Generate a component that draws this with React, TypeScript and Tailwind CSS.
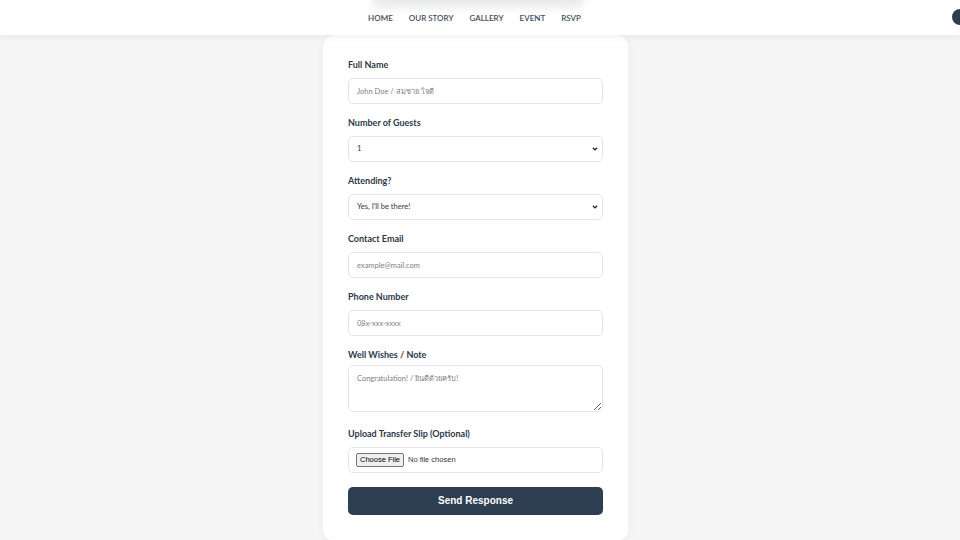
import React from "react";

const font = { fontFamily: '"Lato", "Noto Sans", sans-serif' };

const Field = ({ label, children, mb = "mb-[7px]" }: { label: string; children: React.ReactNode; mb?: string }) => (
  <div className="mb-[13px]">
    <label className={"block text-[9px] leading-[12px] font-bold text-[#2d3748] " + mb}>{label}</label>
    {children}
  </div>
);

const inputCls =
  "block w-full h-[26px] px-[8px] text-[7.5px] text-[#2d3748] placeholder:text-[#808080] bg-white border border-[#e2e5ea] rounded-[5px] outline-none";

const Select = ({ children, value }: { children: React.ReactNode; value: string }) => (
  <div className="relative">
    <select className={inputCls + " appearance-none"} defaultValue={value}>
      {children}
    </select>
    <svg className="absolute right-[5px] top-[10px] w-[6px] h-[6px] pointer-events-none" viewBox="0 0 10 10">
      <path d="M1.5 3 L5 6.5 L8.5 3" fill="none" stroke="#222" strokeWidth="2.2" />
    </svg>
  </div>
);

export default function App() {
  return (
    <div className="w-[960px] h-[540px] overflow-hidden bg-[#f5f5f6] relative" style={font}>
      <header className="relative z-10 h-[35px] bg-white shadow-[0_2px_8px_rgba(0,0,0,0.06)] flex items-center justify-center">
        <div className="absolute left-[372px] top-[-8px] w-[212px] h-[16px] rounded-full bg-[#e9eaec] blur-[4px]" />
        <nav className="flex gap-[16px] ml-[-11px] pt-[1px] text-[8px] font-semibold text-[#3f4a5a]">
          <span>HOME</span>
          <span>OUR STORY</span>
          <span>GALLERY</span>
          <span>EVENT</span>
          <span>RSVP</span>
        </nav>
        <div className="absolute right-[-8px] top-[9px] w-[16px] h-[16px] rounded-full bg-[#2c3e50]" />
      </header>

      <main className="flex justify-center">
        <div className="w-[305px] ml-[-9px] bg-white rounded-[12px] shadow-[0_2px_10px_rgba(0,0,0,0.04)] px-[25px] pt-[24px] pb-[26px]">
          <Field label="Full Name">
            <input className={inputCls} placeholder="John Doe / สมชาย ใจดี" />
          </Field>
          <Field label="Number of Guests">
            <Select value="1">
              <option>1</option>
              <option>2</option>
              <option>3</option>
            </Select>
          </Field>
          <Field label="Attending?">
            <Select value="yes">
              <option value="yes">Yes, I'll be there!</option>
              <option value="no">Sorry, I can't make it</option>
            </Select>
          </Field>
          <Field label="Contact Email">
            <input className={inputCls} placeholder="example@mail.com" />
          </Field>
          <Field label="Phone Number">
            <input className={inputCls} placeholder="08x-xxx-xxxx" />
          </Field>
          <div className="mb-[16px]">
            <label className="block mb-[4px] text-[9px] leading-[12px] font-bold text-[#2d3748]">Well Wishes / Note</label>
            <textarea
              className="block w-full h-[47px] px-[8px] py-[7px] text-[7.5px] placeholder:text-[#808080] bg-white border border-[#e2e5ea] rounded-[5px] outline-none"
              placeholder="Congratulation! / ยินดีด้วยครับ!"
            />
          </div>
          <Field label="Upload Transfer Slip (Optional)" mb="mb-[7px]">
            <div className="w-full h-[26px] px-[7px] flex items-center border border-[#e2e5ea] rounded-[5px] bg-white">
              <input
                type="file"
                className="text-[7.5px] text-[#2d3748] file:mr-[4px] file:px-[3px] file:py-0 file:text-[7.5px] file:text-black file:bg-[#efefef] file:border file:border-[#767676] file:rounded-[2px]"
                style={{ fontFamily: '"Liberation Sans", "Lato", sans-serif' }}
              />
            </div>
          </Field>
          <button
            className="w-full h-[28px] rounded-[5px] bg-[#2c3e50] text-white text-[10px] font-bold"
            style={{ fontFamily: '"Liberation Sans", Arial, sans-serif' }}
          >
            Send Response
          </button>
        </div>
      </main>
    </div>
  );
}
